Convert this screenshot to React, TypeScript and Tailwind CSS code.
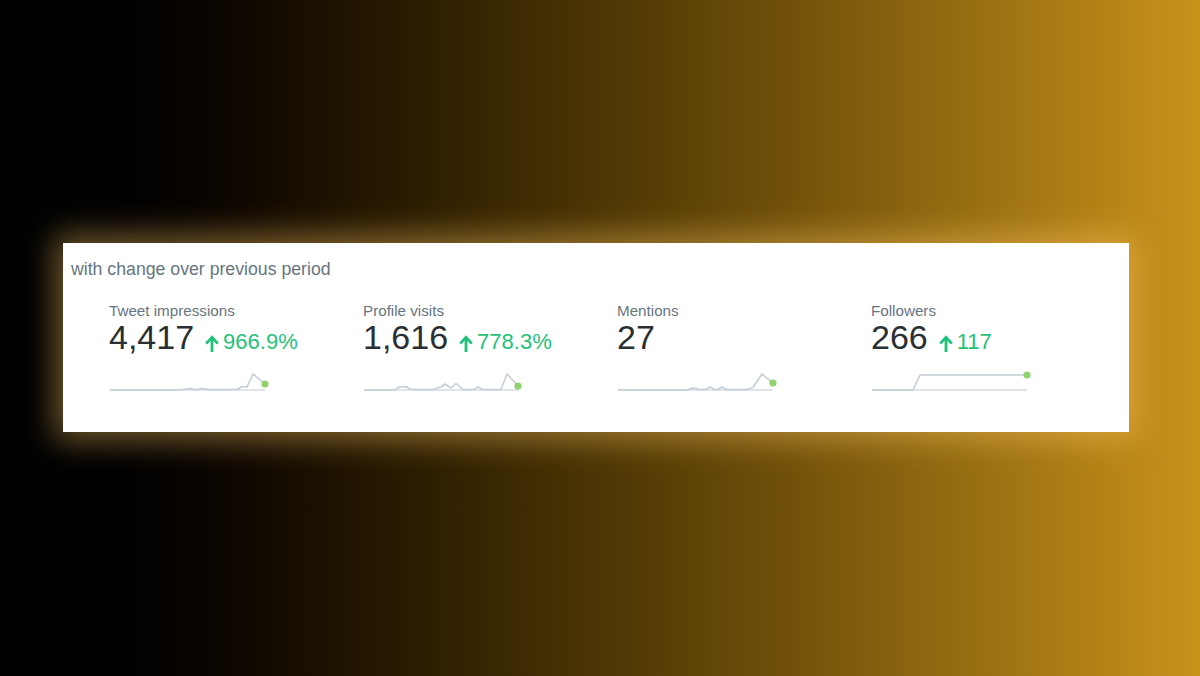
import React from "react";

type Metric = {
  label: string;
  value: string;
  change?: string;
  line: [number, number][];
};

const metrics: Metric[] = [
  {
    label: "Tweet impressions",
    value: "4,417",
    change: "966.9%",
    line: [
      [1, 22], [70, 22], [81, 20.5], [87, 21.5], [94, 20.5], [100, 21.5], [128, 21.5],
      [133, 18.5], [138, 19], [144, 6], [156, 16],
    ],
  },
  {
    label: "Profile visits",
    value: "1,616",
    change: "778.3%",
    line: [
      [1, 22], [32, 22], [36, 19], [43, 18.5], [48, 21.5], [70, 21.5], [78, 19],
      [82, 16], [88, 20], [93, 15.5], [100, 21.5], [111, 21.5], [115, 19], [120, 21.5],
      [138, 21.5], [144, 6], [155, 18],
    ],
  },
  {
    label: "Mentions",
    value: "27",
    line: [
      [1, 22], [70, 22], [76, 20], [82, 21.5], [88, 21.5], [93, 19], [98, 21.5],
      [101, 21.5], [105, 19], [110, 21.5], [130, 21.5], [136, 19.5], [145, 6], [156, 15],
    ],
  },
  {
    label: "Followers",
    value: "266",
    change: "117",
    line: [
      [1, 22], [42, 22], [49, 7], [156, 7],
    ],
  },
];

function Arrow() {
  return (
    <svg width="14" height="17" viewBox="0 0 14 17" className="block">
      <path d="M7 17V2.8" stroke="#1fc27a" strokeWidth="2.8" fill="none" />
      <path d="M1.2 8.6L7 2.4L12.8 8.6" stroke="#1fc27a" strokeWidth="2.8" fill="none" strokeLinejoin="miter" />
    </svg>
  );
}

function Spark({ pts }: { pts: [number, number][] }) {
  const last = pts[pts.length - 1];
  return (
    <svg width="162" height="26" viewBox="0 0 162 26" className="block">
      <line x1="1" y1="22" x2="156" y2="22" stroke="#d5dde4" strokeWidth="1.6" />
      <polyline
        points={pts.map((p) => p.join(",")).join(" ")}
        fill="none"
        stroke="#c4ced6"
        strokeWidth="1.6"
        strokeLinejoin="round"
      />
      <circle cx={last[0]} cy={last[1]} r="3.6" fill="#8fd36f" />
    </svg>
  );
}

export default function App() {
  return (
    <div
      className="w-[1200px] h-[676px] overflow-hidden bg-gradient-to-r from-[#000000] to-[#c9931b] pt-[243px] pl-[63px]"
      style={{ fontFamily: '"Liberation Sans", Arial, sans-serif' }}
    >
      <div className="w-[1066px] h-[189px] bg-white shadow-[0_0_30px_8px_rgba(255,200,100,0.45)] px-2 pt-[16px]">
        <div className="text-[17.7px] leading-[20px] text-[#66757f]">with change over previous period</div>
        <div className="flex pl-[38px] mt-[23px]">
          {metrics.map((m) => (
            <div key={m.label} className="w-[254px] shrink-0 flex flex-col">
              <div className="text-[15.2px] leading-[17px] text-[#66757f]">{m.label}</div>
              <div className="flex items-baseline h-[36px]">
                <span className="text-[34px] leading-[36px] text-[#292f33]">{m.value}</span>
                {m.change && (
                  <span className="flex items-baseline ml-[11px] text-[22px] leading-[24px] text-[#1fc27a]">
                    <span className="self-center mr-[4px] relative top-[1px]">
                      <Arrow />
                    </span>
                    {m.change}
                  </span>
                )}
              </div>
              <div className="mt-[13px]">
                <Spark pts={m.line} />
              </div>
            </div>
          ))}
        </div>
      </div>
    </div>
  );
}
